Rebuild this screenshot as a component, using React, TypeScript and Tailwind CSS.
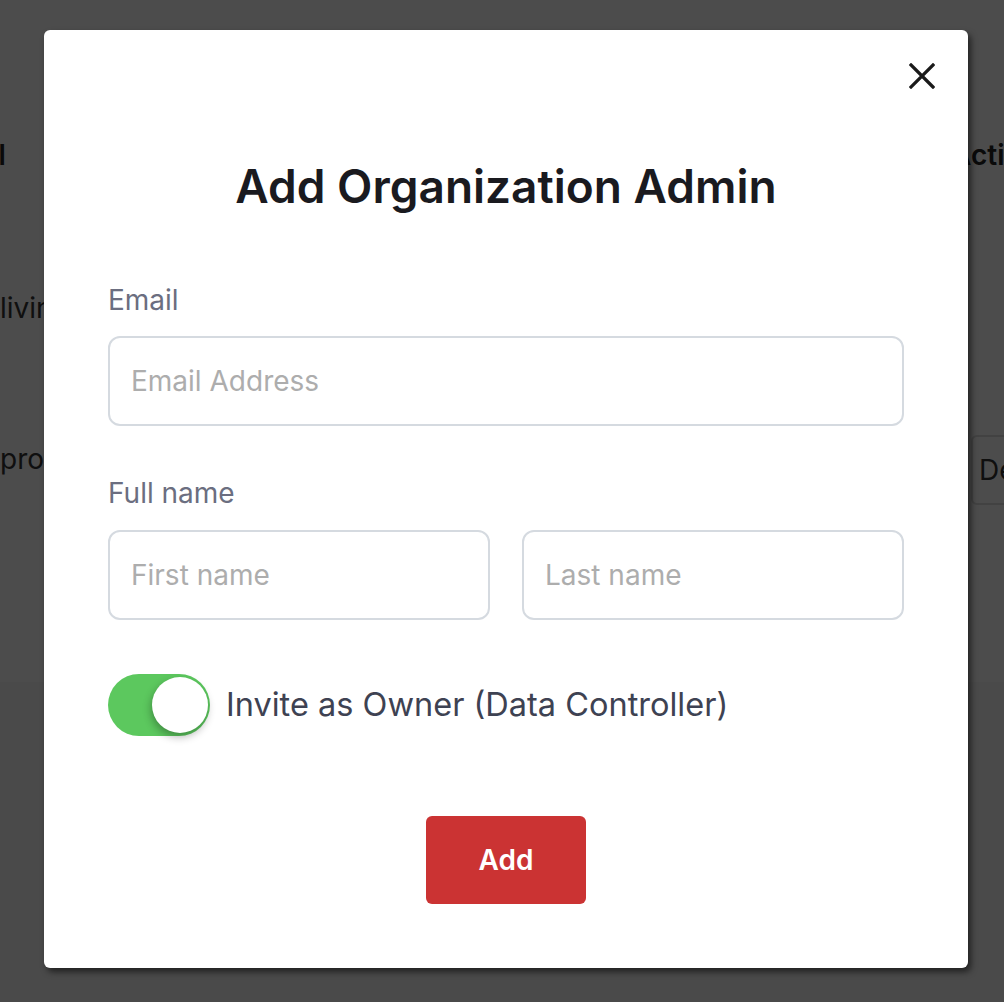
import React from 'react'

function Toggle() {
  return (
    <div className="relative h-[62px] w-[102px] shrink-0 rounded-full bg-[#5cc85e]">
      <div className="absolute right-[2px] top-[3px] h-[56px] w-[56px] rounded-full bg-white shadow-[-1px_4px_8px_rgba(0,0,0,0.3)]" />
    </div>
  )
}

export default function App() {
  return (
    <div className="relative h-[1002px] w-full overflow-hidden bg-[#f7f7f8] font-['Inter','Noto_Sans',sans-serif]">
      {/* page behind the dialog */}
      <div className="h-[682px] bg-white text-[28px] leading-[34px] text-[#333]">
        <div className="ml-[-67px] grid grid-cols-[1018px_200px] pt-[138px] font-semibold text-[#222]">
          <span>Email</span>
          <span>Actions</span>
        </div>
        <div className="ml-[-67px] mt-[119px] grid grid-cols-[1018px_200px]">
          <span className="pl-[67px]">living</span>
          <span />
        </div>
        <div className="ml-[-67px] mt-[110px] grid grid-cols-[1018px_200px] items-start">
          <span className="pl-[67px] pt-[7px]">process</span>
          <span className="ml-[20px] flex h-[70px] w-[130px] items-center rounded-md border-2 border-[#ddd] px-[6px]">Delete</span>
        </div>
      </div>

      <div className="absolute inset-0 bg-black/70">
        <div className="relative ml-[44px] mt-[30px] flex h-[938px] w-[924px] flex-col rounded-[6px] bg-white px-16 shadow-[3px_4px_6px_rgba(0,0,0,0.55)]">
          <button className="absolute right-[33px] top-[33px] text-[#1a1a1a]">
            <svg width="26" height="26" viewBox="0 0 26 26" fill="none" stroke="currentColor" strokeWidth="3.2" strokeLinecap="square">
              <path d="M2 2L24 24M24 2L2 24" />
            </svg>
          </button>

          <h2 className="mt-[130px] text-center text-[46px] font-semibold leading-[52px] text-[#1a1a1f]">
            Add Organization Admin
          </h2>

          <label className="mt-[71px] text-[28px] leading-[34px] text-[#6b6e80]">Email</label>
          <input
            placeholder="Email Address"
            className="mt-[19px] h-[90px] w-full rounded-xl border-2 border-[#d5dae0] px-[21px] text-[28px] outline-none placeholder:text-[#adadad]"
          />

          <label className="mt-[50px] text-[28px] leading-[34px] text-[#6b6e80]">Full name</label>
          <div className="mt-[20px] flex gap-8">
            <input
              placeholder="First name"
              className="h-[90px] w-full min-w-0 rounded-xl border-2 border-[#d5dae0] px-[21px] text-[28px] outline-none placeholder:text-[#adadad]"
            />
            <input
              placeholder="Last name"
              className="h-[90px] w-full min-w-0 rounded-xl border-2 border-[#d5dae0] px-[21px] text-[28px] outline-none placeholder:text-[#adadad]"
            />
          </div>

          <div className="mt-[54px] flex items-center gap-[16px]">
            <Toggle />
            <span className="text-[32.5px] text-[#3e4252]">Invite as Owner (Data Controller)</span>
          </div>

          <button className="mx-auto mt-[80px] h-[88px] w-[160px] rounded-[6px] bg-[#cb3333] text-[28px] font-semibold text-white">
            Add
          </button>
        </div>
      </div>
    </div>
  )
}
